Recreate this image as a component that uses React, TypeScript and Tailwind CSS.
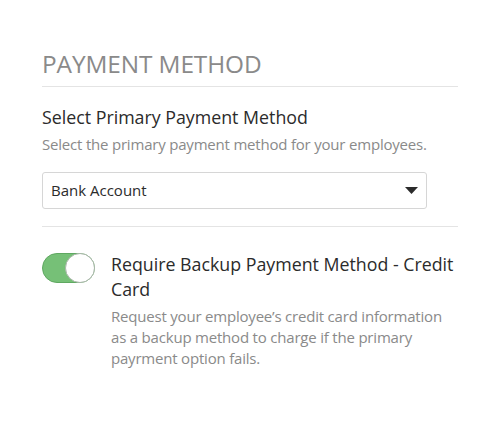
export default function App() {
  return (
    <div className="w-[500px] h-[435px] bg-white pt-[49px] px-[42px]" style={{ fontFamily: '"Open Sans", sans-serif' }}>
      <div className="w-[416px]">
        <h2 className="text-[24.4px] leading-[30px] text-[#8a8a8a] tracking-[-0.1px]">PAYMENT METHOD</h2>
        <div className="mt-[7px] border-t border-[#e4e4e4]" />

        <h3 className="mt-[18px] text-[17.8px] leading-[24px] text-[#2b2b2b]">Select Primary Payment Method</h3>
        <p className="mt-[5px] text-[15px] leading-[20px] text-[#8a8a8a] tracking-[-0.2px]">
          Select the primary payment method for your employees.
        </p>

        <div className="mt-[18px] w-[385px] h-[37px] rounded-[3px] border border-[#d6d6d6] flex items-center justify-between pl-[8px] pr-[8px]">
          <span className="text-[15px] text-[#2b2b2b]">Bank Account</span>
          <svg width="13" height="7" viewBox="0 0 13 7">
            <path d="M0 0h13L6.5 7z" fill="#2b2b2b" />
          </svg>
        </div>

        <div className="mt-[17px] border-t border-[#e4e4e4]" />

        <div className="mt-[25px] flex gap-[16px]">
          <div className="mt-[1px] w-[53px] h-[30px] shrink-0 rounded-full bg-[#76c077] border border-[#5fa861] relative">
            <div className="absolute right-[-1px] top-[-1px] w-[30px] h-[30px] rounded-full bg-white border border-[#a9b5a9]" />
          </div>
          <div>
            <div className="text-[17.8px] leading-[25px] text-[#2b2b2b]">Require Backup Payment Method - Credit Card</div>
            <p className="mt-[4px] text-[15px] leading-[21px] text-[#8a8a8a] tracking-[-0.2px]">
              Request your employee’s credit card information as a backup method to charge if the primary payrment option fails.
            </p>
          </div>
        </div>
      </div>
    </div>
  );
}
